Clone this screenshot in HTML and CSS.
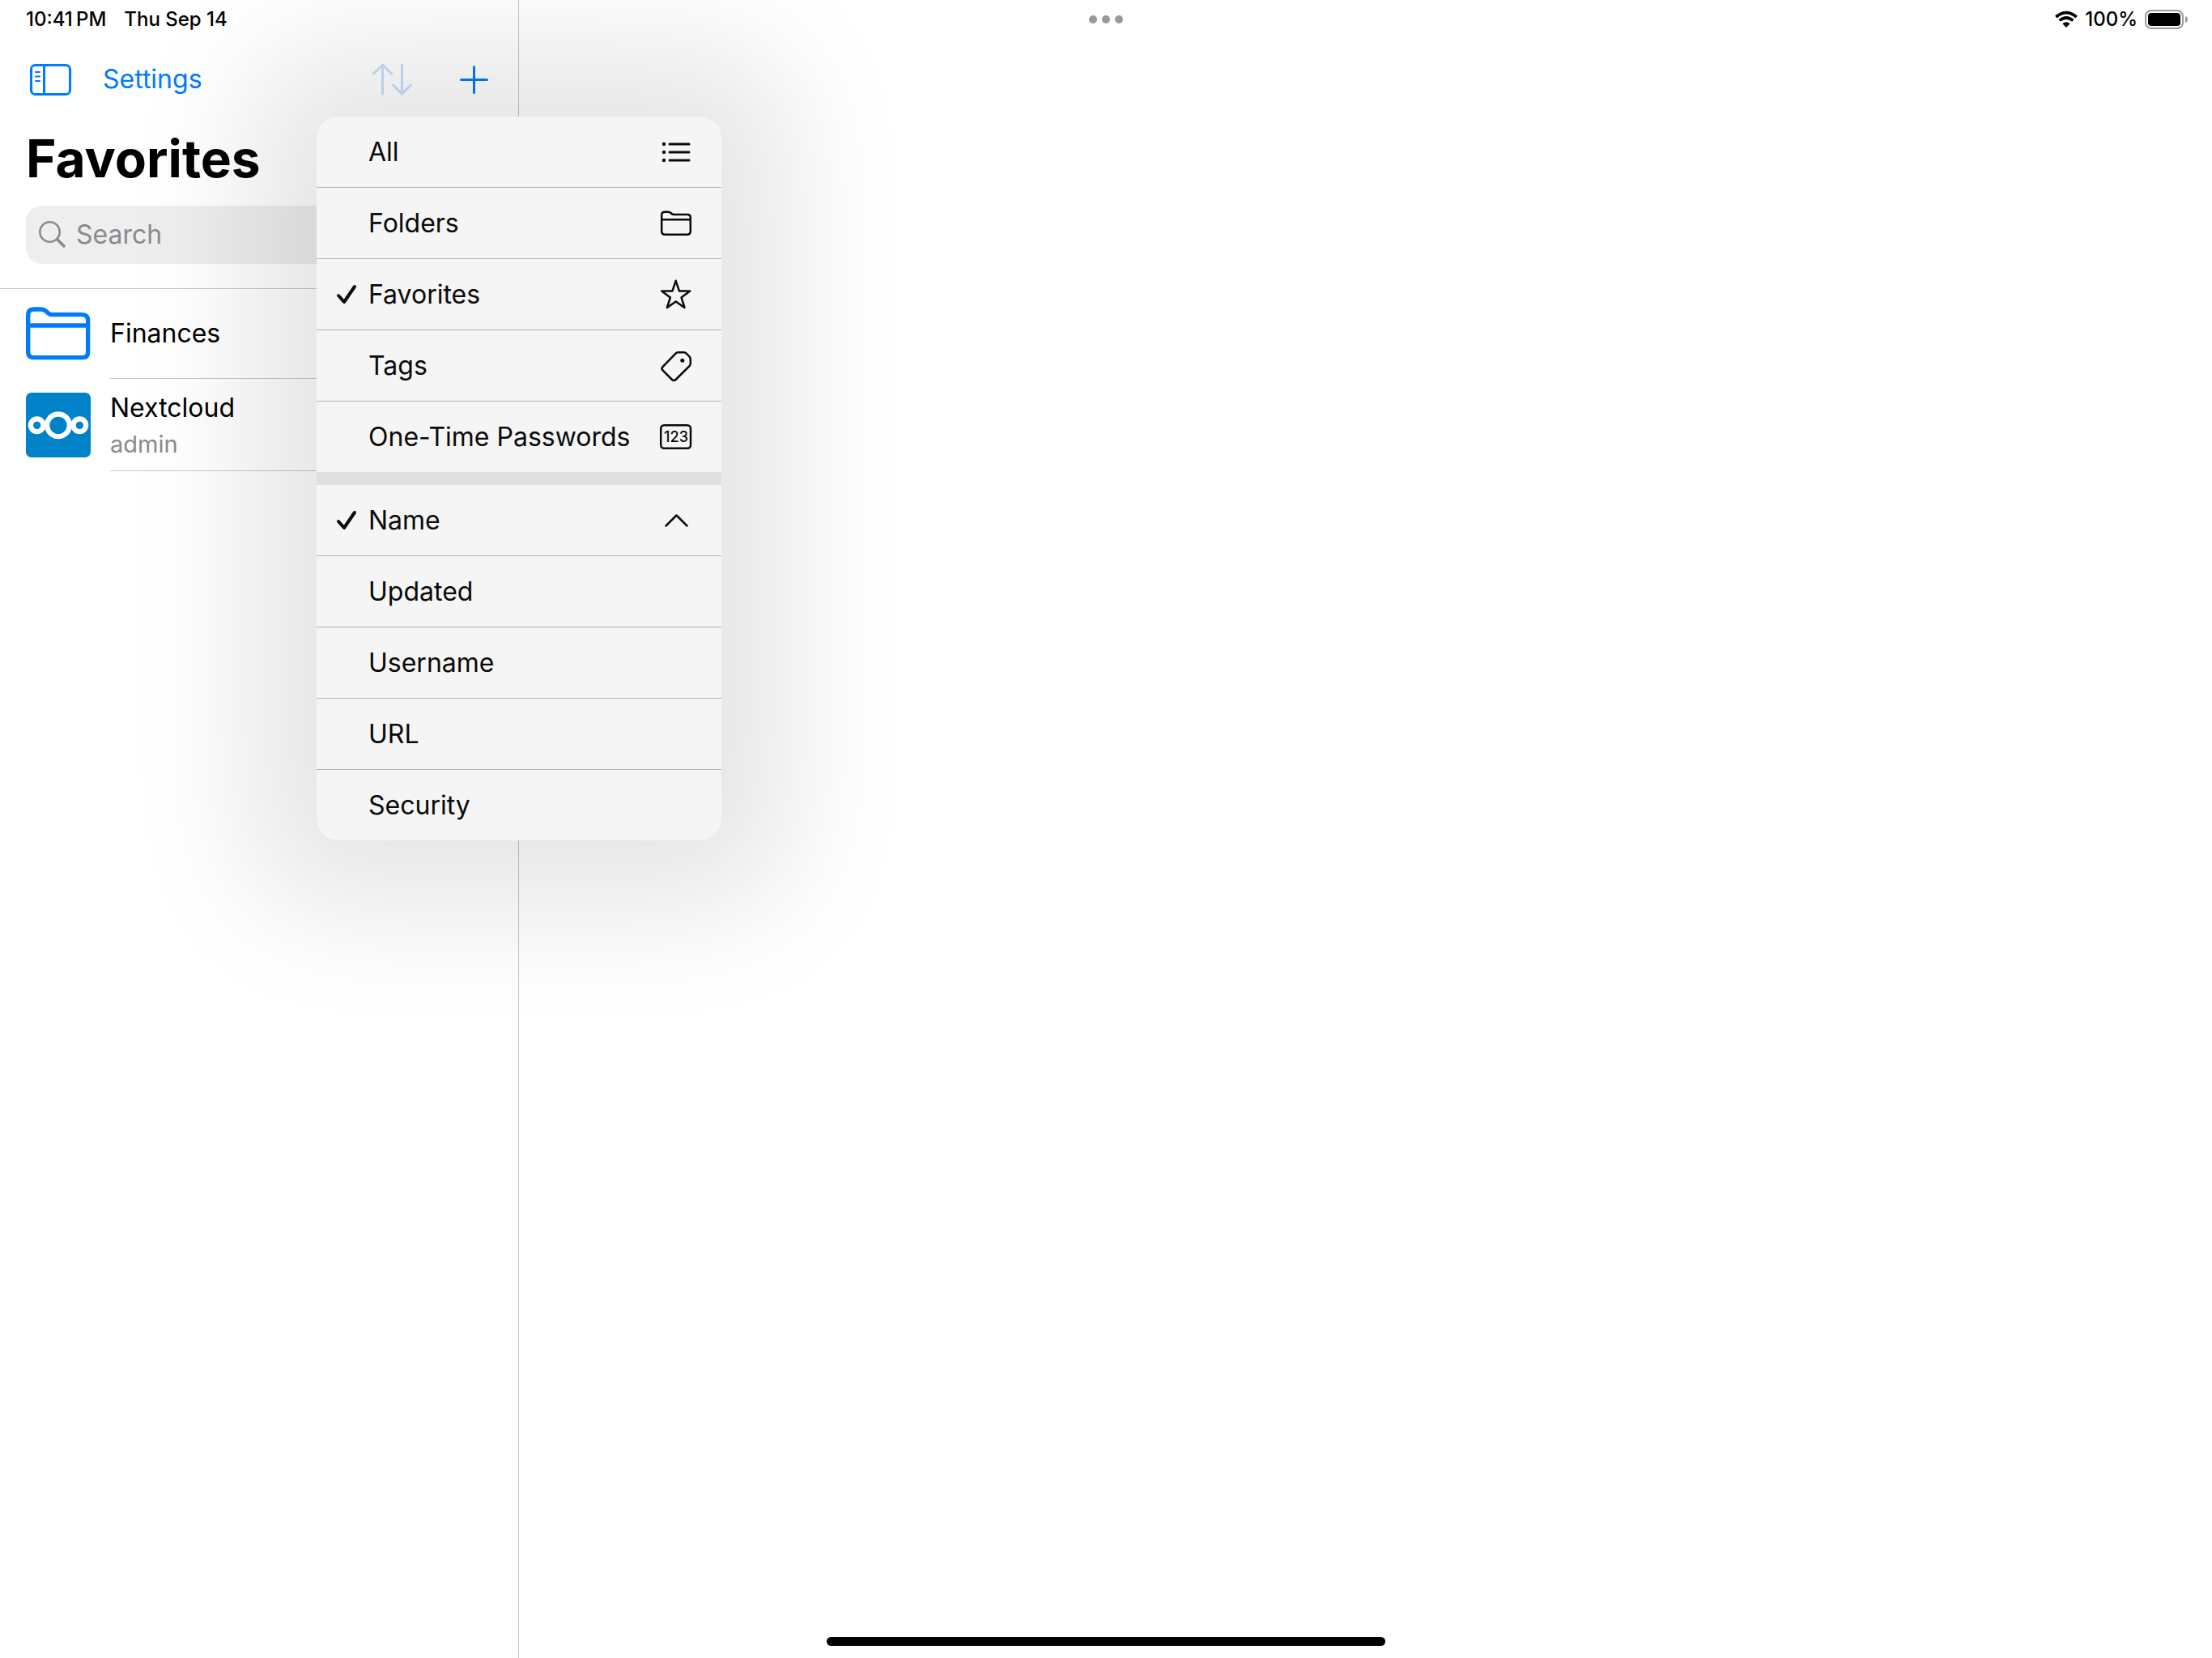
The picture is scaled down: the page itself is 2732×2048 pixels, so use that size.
FILE: index.html
```html
<!DOCTYPE html>
<html lang="en">
<head>
<meta charset="utf-8">
<meta name="viewport" content="width=device-width, initial-scale=1">
<title>Favorites</title>
<link rel="stylesheet" href="styles.css">
</head>
<body>
<div class="screen">
  <header class="status">
    <div class="status-side status-start">
      <time>10:41&#8201;PM</time>
      <span>Thu Sep 14</span>
    </div>
    <div class="status-dots"><i></i><i></i><i></i></div>
    <div class="status-side status-end">
      <svg class="wifi" viewBox="0 0 84 60" aria-hidden="true">
        <g fill="none" stroke="#000" stroke-width="11">
          <path d="M4 21Q42 -11 80 21"/>
          <path d="M17 34Q42 14 67 34"/>
        </g>
        <path d="M28 46Q42 34 56 46L42 60Z"/>
      </svg>
      <span>100%</span>
      <svg class="battery" viewBox="0 0 54 24" aria-hidden="true">
        <rect x="1" y="1" width="46" height="22" rx="7" fill="none" stroke="#9b9b9b" stroke-width="2"/>
        <rect x="4" y="4" width="40" height="16" rx="4"/>
        <path d="M50 8Q53 9 53 12T50 16Z" fill="#9b9b9b"/>
      </svg>
    </div>
  </header>

  <aside class="sidebar">
    <nav class="toolbar">
      <div class="toolbar-group">
        <button class="tool" type="button" aria-label="Toggle sidebar">
          <svg class="panel-icon" viewBox="0 0 51 39" fill="none" stroke="currentColor" stroke-width="3" aria-hidden="true">
            <rect x="1.5" y="1.5" width="48" height="36" rx="5"/>
            <path d="M17.5 2V37"/>
            <path d="M7 10H12M7 15.500H12M7 21H12" stroke-width="2" stroke-linecap="round"/>
          </svg>
        </button>
        <button class="tool" type="button">Settings</button>
      </div>
      <div class="toolbar-group toolbar-end">
        <button class="tool tool-open" type="button" aria-label="Sort and filter" aria-haspopup="menu" aria-expanded="true">
          <svg class="sort-icon" viewBox="0 0 49 40" fill="none" stroke="currentColor" stroke-width="3" stroke-linecap="round" stroke-linejoin="round" aria-hidden="true">
            <path d="M12.500 38V2M1.500 13L12.500 2L23.500 13M36.500 2V38M25.500 27L36.500 38L47.500 27"/>
          </svg>
        </button>
        <button class="tool" type="button" aria-label="Add">
          <svg class="plus-icon" viewBox="0 0 35 35" fill="none" stroke="currentColor" stroke-width="3" stroke-linecap="round" aria-hidden="true">
            <path d="M17.500 1.500V33.500M1.500 17.500H33.500"/>
          </svg>
        </button>
      </div>

      <div class="menu" role="menu">
        <div class="menu-group" role="group">
          <button class="item" type="button" role="menuitemradio" aria-checked="false">
            <span class="item-label">All</span>
            <svg class="item-icon" viewBox="0 0 40 39" aria-hidden="true">
              <path d="M12 10H36M12 20H36M12 30H36" stroke-width="3"/>
              <g fill="currentColor" stroke="none"><circle cx="5" cy="10" r="2.200"/><circle cx="5" cy="20" r="2.200"/><circle cx="5" cy="30" r="2.200"/></g>
            </svg>
          </button>
          <button class="item" type="button" role="menuitemradio" aria-checked="false">
            <span class="item-label">Folders</span>
            <svg class="item-icon" viewBox="0 0 40 39" aria-hidden="true">
              <path d="M2.200 29.500V9.500Q2.200 5.700 6 5.700H10Q12 5.700 13.500 7L14.500 8Q15.500 9 17.500 9H34Q37.800 9 37.800 12.800V29.500Q37.800 33.800 33.500 33.800H6.500Q2.200 33.800 2.200 29.500ZM2.200 15.200H37.800"/>
            </svg>
          </button>
          <button class="item" type="button" role="menuitemradio" aria-checked="true">
            <svg class="check" viewBox="0 0 24 24" aria-hidden="true"><path d="M2 13L9 21L22 2"/></svg>
            <span class="item-label">Favorites</span>
            <svg class="item-icon" viewBox="0 0 40 39" aria-hidden="true">
              <path d="M19.700 2.800L23.900 15.400L37.200 15.500L26.500 23.400L30.500 36L19.700 28.400L8.900 36L12.900 23.400L2.200 15.500L15.500 15.400Z"/>
            </svg>
          </button>
          <button class="item" type="button" role="menuitemradio" aria-checked="false">
            <span class="item-label">Tags</span>
            <svg class="item-icon" viewBox="0 0 40 39" aria-hidden="true">
              <path d="M22.500 3.200H29.500Q31.300 3.200 32.600 4.500L36.600 8.700Q37.800 10 37.800 11.800V17Q37.800 18.800 36.500 20.100L19.500 37Q17.300 39.200 15.100 37L3.500 25.300Q1.500 23.200 3.500 21.100L19.500 4.600Q20.800 3.200 22.500 3.200Z"/>
              <circle cx="27.800" cy="13.300" r="2.500" fill="currentColor" stroke="none"/>
            </svg>
          </button>
          <button class="item" type="button" role="menuitemradio" aria-checked="false">
            <span class="item-label">One-Time Passwords</span>
            <svg class="item-icon" viewBox="0 0 40 39" aria-hidden="true">
              <rect x="1.200" y="5.200" width="36.800" height="28.600" rx="4"/>
              <text class="digits" x="20" y="26" text-anchor="middle">123</text>
            </svg>
          </button>
        </div>
        <div class="menu-group" role="group">
          <button class="item" type="button" role="menuitemradio" aria-checked="true">
            <svg class="check" viewBox="0 0 24 24" aria-hidden="true"><path d="M2 13L9 21L22 2"/></svg>
            <span class="item-label">Name</span>
            <svg class="item-icon" viewBox="0 0 40 39" aria-hidden="true"><path d="M7.500 26.500L20.500 13.500L33.500 26.500"/></svg>
          </button>
          <button class="item" type="button" role="menuitemradio" aria-checked="false"><span class="item-label">Updated</span></button>
          <button class="item" type="button" role="menuitemradio" aria-checked="false"><span class="item-label">Username</span></button>
          <button class="item" type="button" role="menuitemradio" aria-checked="false"><span class="item-label">URL</span></button>
          <button class="item" type="button" role="menuitemradio" aria-checked="false"><span class="item-label">Security</span></button>
        </div>
      </div>
    </nav>

    <h1 class="title">Favorites</h1>

    <label class="search">
      <svg class="search-icon" viewBox="0 0 34 34" fill="none" stroke="currentColor" stroke-linecap="round" aria-hidden="true">
        <circle cx="13.500" cy="13.500" r="12.200" stroke-width="2.600"/>
        <path d="M22.500 22.500L31 31" stroke-width="3.400"/>
      </svg>
      <input class="search-input" type="search" placeholder="Search" aria-label="Search">
    </label>

    <ul class="entries">
      <li class="entry">
        <svg class="entry-icon" viewBox="0 0 240 240" fill="none" stroke="#007aff" stroke-width="16" aria-hidden="true">
          <path d="M8 186V49Q8 27 28 27H56Q66 27 74 34L82 41Q88 47 98 47H208Q230 47 230 69V186Q230 206 210 206H28Q8 206 8 186ZM8 87H230"/>
        </svg>
        <div class="entry-text"><span class="entry-name">Finances</span></div>
      </li>
      <li class="entry">
        <svg class="entry-icon" viewBox="0 0 240 240" aria-hidden="true">
          <rect width="240" height="240" rx="20" fill="#0082c9"/>
          <g fill="none" stroke="#fff" stroke-width="19">
            <circle cx="120" cy="121" r="41.500"/>
            <circle cx="41" cy="121" r="23.500"/>
            <circle cx="199" cy="121" r="23.500"/>
          </g>
        </svg>
        <div class="entry-text entry-text-double"><span class="entry-name">Nextcloud</span><span class="entry-user">admin</span></div>
      </li>
    </ul>
  </aside>

  <main class="detail"></main>
  <div class="home-indicator"></div>
</div>
</body>
</html>
```
FILE: styles.css
```css
* {
  box-sizing: border-box;
}

body {
  margin: 0;
  background: #fff;
  color: #000;
  font-family: Inter, "Liberation Sans", sans-serif;
  font-size: 32px;
  line-height: 40px;
}

button,
input {
  padding: 0;
  border: 0;
  background: none;
  color: inherit;
  font: inherit;
}

svg {
  display: block;
  flex: none;
  overflow: visible;
}

/* The status bar and the home indicator share the grid with both panes. */
.screen {
  display: grid;
  grid-template-columns: 641px 1fr;
  grid-template-rows: 48px 1fr 26px;
  min-height: 100vh;
}

.status {
  grid-area: 1 / 1 / 2 / 3;
  display: grid;
  grid-template-columns: 1fr auto 1fr;
  align-items: center;
  padding: 0 29px;
  font-size: 24px;
  font-weight: 500;
}

.status-side {
  display: flex;
  align-items: center;
}

.status-start {
  gap: 22px;
  padding-left: 3px;
}

.status-end {
  justify-content: flex-end;
  gap: 9px;
}

.status-dots {
  display: flex;
  gap: 6px;
}

.status-dots i {
  width: 10px;
  height: 10px;
  border-radius: 50%;
  background: #999;
}

.wifi {
  width: 28px;
  height: 20px;
}

.battery {
  width: 54px;
  height: 24px;
}

.sidebar {
  grid-area: 1 / 1 / 4 / 2;
  padding-top: 48px;
  border-right: 1px solid #c6c6c8;
}

.detail {
  grid-area: 2 / 2 / 3 / 3;
}

.home-indicator {
  grid-area: 3 / 1 / 4 / 3;
  justify-self: center;
  width: 690px;
  height: 11px;
  border-radius: 6px;
  background: #000;
}

/* Toolbar */
.toolbar {
  position: relative;
  display: flex;
  align-items: center;
  justify-content: space-between;
  height: 100px;
  padding: 0 37px;
  color: #007aff;
}

.toolbar-group {
  display: flex;
  align-items: center;
  gap: 39px;
}

.toolbar-end {
  gap: 59px;
}

.tool-open {
  color: #c8dff8;
}

.panel-icon {
  width: 51px;
  height: 39px;
}

.sort-icon {
  width: 49px;
  height: 40px;
}

.plus-icon {
  width: 35px;
  height: 35px;
}

.title {
  margin: 0 32px 10px;
  font-size: 64px;
  font-weight: 700;
  line-height: 96px;
}

.search {
  display: flex;
  align-items: center;
  gap: 12px;
  height: 72px;
  margin: 0 32px 30px;
  padding: 0 16px;
  border-radius: 20px;
  background: #eeeeef;
  color: #8a8a8e;
}

.search-icon {
  width: 34px;
  height: 34px;
}

.search-input {
  flex: 1;
  min-width: 0;
  outline: 0;
  appearance: none;
}

.search-input::placeholder {
  color: #8a8a8e;
  opacity: 1;
}

/* Entries */
.entries {
  margin: 0;
  padding: 0;
  border-top: 1px solid #c6c6c8;
  list-style: none;
}

.entry {
  display: flex;
  align-items: center;
  gap: 24px;
  padding-left: 32px;
}

.entry-icon {
  width: 80px;
  height: 80px;
}

.entry-text {
  display: flex;
  flex: 1;
  flex-direction: column;
  justify-content: center;
  gap: 5px;
  min-height: 111px;
  border-bottom: 1px solid #c6c6c8;
}

.entry-text-double {
  padding: 16px 0 12px;
}

.entry-user {
  color: #8a8a8e;
  font-size: 29px;
}

/* Menu */
.menu {
  position: absolute;
  z-index: 1;
  top: 96px;
  left: 391px;
  display: grid;
  gap: 16px;
  width: 500px;
  border-radius: 26px;
  background: #e0e0e0;
  box-shadow: 0 0 160px 80px rgba(10, 10, 0, 0.105);
  color: #0a0a0a;
}

.menu-group {
  background: #f5f5f5;
}

.menu-group:first-child {
  border-radius: 26px 26px 0 0;
}

.menu-group:last-child {
  border-radius: 0 0 26px 26px;
}

.item {
  display: grid;
  grid-template-columns: 24px 1fr 40px;
  align-items: center;
  column-gap: 15px;
  width: 100%;
  height: 87px;
  padding: 0 36px 0 25px;
  text-align: left;
}

.item + .item {
  height: 88px;
  border-top: 1px solid #b4b4b4;
}

.item-label {
  grid-column: 2;
  white-space: nowrap;
}

.check {
  width: 24px;
  height: 24px;
  fill: none;
  stroke: currentColor;
  stroke-width: 4;
  stroke-linecap: round;
  stroke-linejoin: round;
}

.item-icon {
  width: 40px;
  height: 39px;
  fill: none;
  stroke: currentColor;
  stroke-width: 2.5;
  stroke-linecap: round;
  stroke-linejoin: round;
}

.digits {
  fill: currentColor;
  stroke: none;
  font-size: 18px;
  font-weight: 500;
}
```
